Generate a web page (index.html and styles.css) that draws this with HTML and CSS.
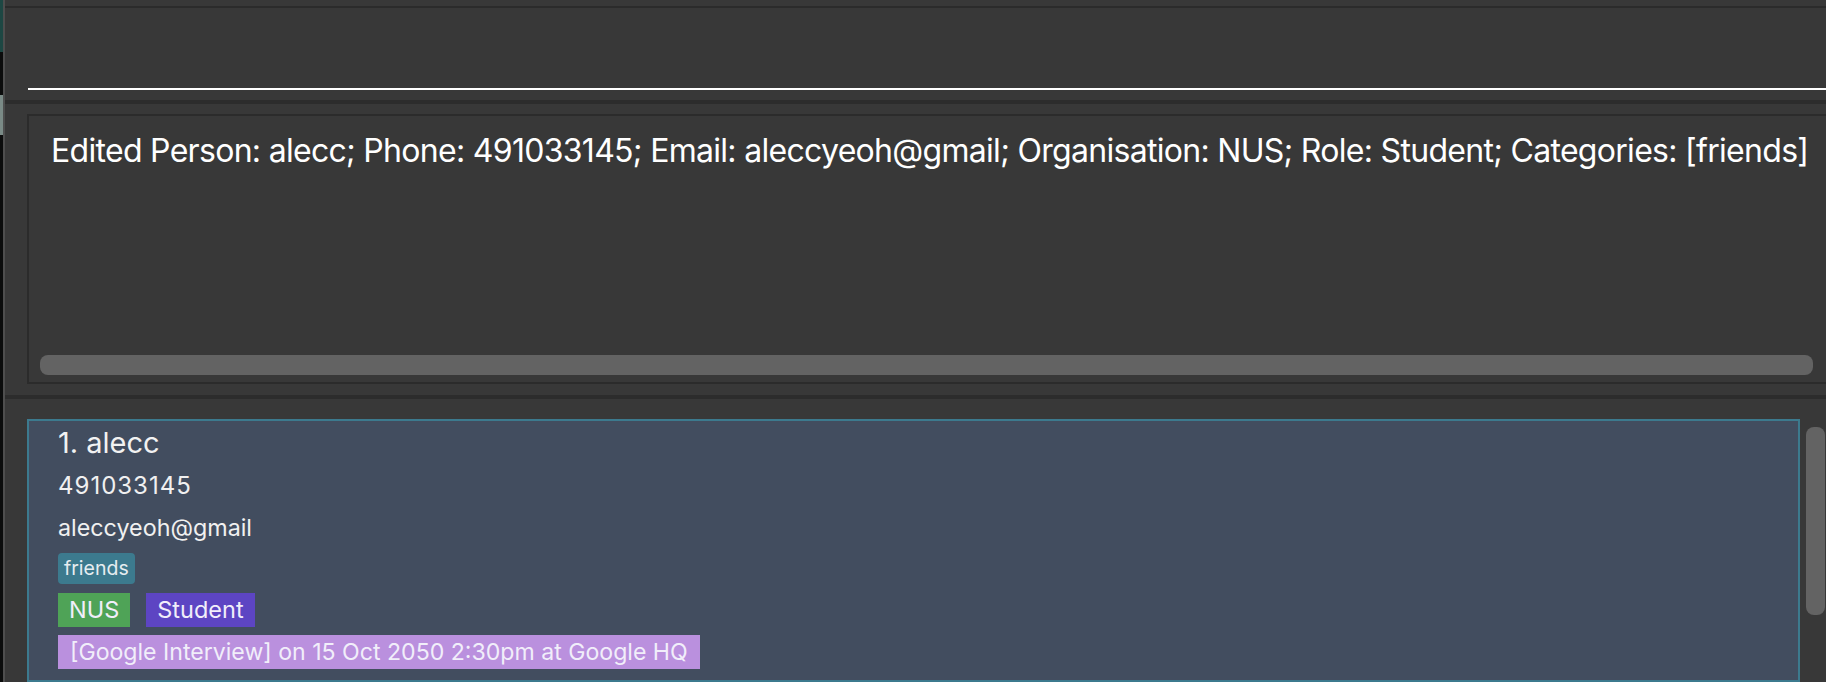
FILE: index.html
```html
<!DOCTYPE html>
<html lang="en">
<head>
<meta charset="utf-8">
<title>Address Book</title>
<link rel="stylesheet" href="styles.css">
</head>
<body>
<div class="app">
  <div class="edge">
    <div class="edge-teal"></div>
    <div class="edge-grey"></div>
  </div>
  <div class="edge-line"></div>
  <div class="main">
    <div class="command">
      <div class="cmd-input"></div>
    </div>
    <div class="sep"></div>
    <div class="result-wrap">
      <div class="result-box">
        <div class="result-text">Edited Person: alecc; Phone: 491033145; Email: aleccyeoh@gmail; Organisation: NUS; Role: Student; Categories: [friends]</div>
        <div class="hscroll"></div>
      </div>
    </div>
    <div class="sep sep-low"></div>
    <div class="list">
      <div class="card">
        <div class="name">1. alecc</div>
        <div class="field phone">491033145</div>
        <div class="field email">aleccyeoh@gmail</div>
        <div class="tags tags-cat">
          <span class="tag tag-friends">friends</span>
        </div>
        <div class="tags tags-org">
          <span class="tag tag-org">NUS</span>
          <span class="tag tag-role">Student</span>
        </div>
        <div class="tags tags-event">
          <span class="tag tag-event">[Google Interview] on 15 Oct 2050 2:30pm at Google HQ</span>
        </div>
      </div>
      <div class="vscroll"></div>
    </div>
  </div>
</div>
</body>
</html>
```

FILE: styles.css
```css
* { box-sizing: border-box; }
html, body {
  margin: 0;
  padding: 0;
  width: 1826px;
  height: 682px;
  overflow: hidden;
  background: #383838;
  font-family: Inter, "Noto Sans", sans-serif;
  color: #ffffff;
}
.app {
  display: flex;
  height: 682px;
}
.edge {
  width: 3px;
  background: #0b0c0c;
  display: flex;
  flex-direction: column;
}
.edge-teal {
  height: 52px;
  background: #1d4743;
}
.edge-grey {
  margin-top: 43px;
  height: 40px;
  background: #7a8a86;
}
.edge-line {
  width: 2px;
  background: #4e4e4e;
}
.main {
  flex: 1;
  display: flex;
  flex-direction: column;
  overflow: hidden;
  min-width: 0;
}
.command {
  margin-top: 6px;
  border-top: 2px solid #2b2b2b;
  height: 94px;
  padding-top: 80px;
  padding-left: 23px;
}
.cmd-input {
  height: 2px;
  background: #ffffff;
}
.sep {
  height: 4px;
  background: #2c2c2c;
  flex-shrink: 0;
}
.result-wrap {
  padding: 10px 0 11px 22px;
}
.result-box {
  width: calc(100% + 40px);
  height: 270px;
  border: 2px solid #2b2b2b;
  padding: 17px 0 0 22px;
  display: flex;
  flex-direction: column;
}
.result-text {
  font-size: 32px;
  letter-spacing: -0.7px;
  line-height: 36px;
  white-space: nowrap;
  flex: 1;
}
.hscroll {
  margin: 0 0 7px -11px;
  width: 1773px;
  height: 20px;
  border-radius: 8px;
  background: #636363;
}
.list {
  display: flex;
  align-items: flex-start;
  padding: 20px 0 0 22px;
  gap: 6px;
  flex: 1;
}
.card {
  width: 1773px;
  height: 263px;
  flex-shrink: 0;
  background: #424d5f;
  border: 2px solid #3c7a8e;
  padding: 6px 0 0 29px;
  display: flex;
  flex-direction: column;
  align-items: flex-start;
}
.name {
  font-size: 29px;
  line-height: 32px;
  color: #f2f2f2;
}
.field {
  font-size: 24px;
  line-height: 42px;
  color: #f0f0f0;
}
.phone {
  margin-top: 6px;
  letter-spacing: 1px;
}
.email {
  font-size: 23.3px;
}
.tags {
  display: flex;
  gap: 16px;
}
.tags-cat { margin-top: 4px; }
.tags-org { margin-top: 9px; }
.tags-event { margin-top: 8px; }
.tag {
  display: inline-block;
  color: #f1eefa;
  font-size: 23.5px;
  line-height: 34px;
  padding: 0 11px;
}
.tag-friends {
  background: #3c7a8e;
  font-size: 19.5px;
  line-height: 31px;
  padding: 0 6px;
  border-radius: 4px;
  color: #e6edf0;
}
.tag-org { background: #4fa357; }
.tag-role { background: #5d45c3; }
.tag-event {
  background: #ba90de;
  font-size: 23.1px;
  padding: 0 12px;
}
.vscroll {
  margin-top: 8px;
  width: 19px;
  height: 188px;
  border-radius: 8px;
  background: #636363;
}
```
